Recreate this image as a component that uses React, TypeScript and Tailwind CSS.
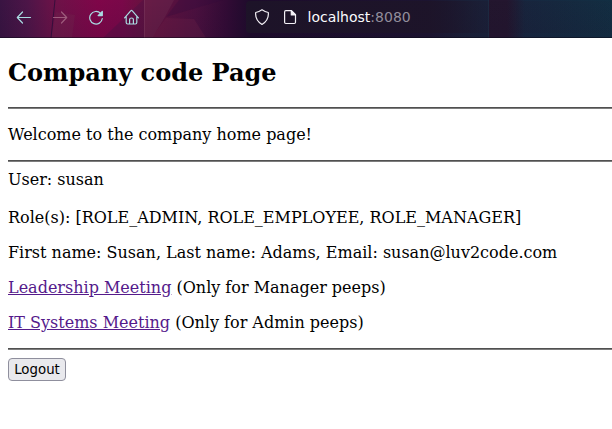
import type { ReactNode } from "react";

function Backdrop() {
  return (
    <svg className="absolute inset-0 h-full w-full" viewBox="0 0 612 38" preserveAspectRatio="none" aria-hidden="true">
      <defs>
        <linearGradient id="sky" x1="0" x2="1" y1="0" y2="0">
          <stop offset="0" stopColor="#391442" />
          <stop offset=".045" stopColor="#4d1548" />
          <stop offset=".09" stopColor="#6d1248" />
          <stop offset=".16" stopColor="#7f0649" />
          <stop offset=".2" stopColor="#7a0849" />
          <stop offset=".235" stopColor="#67123f" />
          <stop offset=".32" stopColor="#4b103f" />
          <stop offset=".37" stopColor="#320b35" />
          <stop offset=".41" stopColor="#1d0b2b" />
          <stop offset=".7" stopColor="#1c1430" />
          <stop offset=".76" stopColor="#1a2038" />
          <stop offset=".85" stopColor="#172740" />
          <stop offset="1" stopColor="#122f43" />
        </linearGradient>
        <linearGradient id="shade" x1="0" x2="0" y1="0" y2="1">
          <stop offset="0" stopColor="#180a28" stopOpacity="0" />
          <stop offset="1" stopColor="#180a28" stopOpacity=".12" />
        </linearGradient>
        <linearGradient id="field" x1="0" x2="1" y1="0" y2="0">
          <stop offset="0" stopColor="#1d1428" stopOpacity=".9" />
          <stop offset=".5" stopColor="#1d1428" stopOpacity=".85" />
          <stop offset=".65" stopColor="#1d1428" stopOpacity=".2" />
          <stop offset="1" stopColor="#1d1428" stopOpacity=".05" />
        </linearGradient>
        <linearGradient id="seam" x1="0" x2="1" y1="0" y2="0">
          <stop offset="0" stopColor="#24162f" />
          <stop offset=".5" stopColor="#24162f" />
          <stop offset="1" stopColor="#24162f" stopOpacity="0" />
        </linearGradient>
      </defs>
      <path fill="url(#sky)" d="M0 0h612v38H0z" />
      <path fill="#752b50" fillOpacity=".3" d="M56 12 75 15 72 38H51z" />
      <path fill="#4b1246" fillOpacity=".4" d="M143 0 103 38h41V0z" />
      <path fill="#6b2b50" fillOpacity=".45" d="M144 0h30l-9 17-13 21h-8z" />
      <path fill="#31093a" fillOpacity=".3" d="M179 0h44l-57 17z" />
      <path fill="#752648" fillOpacity=".3" d="m166 18 28 1 12 19h-55z" />
      <path fill="url(#seam)" d="M489 0h36v38h-36z" />
      <path fill="url(#shade)" d="M0 0h612v38H0z" />
      <path fill="url(#field)" d="M250 1h362v32H250q-4 0-4-4V5q0-4 4-4z" />
      <path stroke="#210d36" strokeOpacity=".7" d="M55 0 51 38" />
      <path stroke="#8b5070" strokeOpacity=".3" d="M144.5 0v38" />
      <path stroke="#27425a" strokeOpacity=".25" d="M488.5 0v38" />
      <path fill="#080716" fillOpacity=".5" d="M0 37h612v1H0z" />
    </svg>
  );
}

function Icon({ className, children }: { className: string; children: ReactNode }) {
  return (
    <svg className={`size-4 shrink-0 ${className}`} viewBox="0 0 16 16" fill="none" stroke="currentColor" strokeWidth="1.2" strokeLinecap="round" strokeLinejoin="round" aria-hidden="true">
      {children}
    </svg>
  );
}

function Toolbar() {
  return (
    <header className="relative h-[38px] overflow-hidden">
      <Backdrop />
      <div className="relative flex h-[34px] items-center">
        <nav className="flex w-[246px] shrink-0 items-center gap-5 pl-4 text-[#a9dbe2]">
          <Icon className=""><path d="M14.5 8.5h-13M6.5 3 1.3 8.5 6.5 14" /></Icon>
          <Icon className="text-[#9e5b7c]"><path d="M1.5 8.5h13M9.5 3l5.2 5.5L9.5 14" /></Icon>
          <Icon className="">
            <path d="M12.6 4.4A6.3 6.3 0 1 0 14.3 9.5" />
            <path d="M14.3 2.4v4.2h-4.2z" fill="currentColor" />
          </Icon>
          <Icon className="">
            <path d="M.6 8.9 6.7 1.8q.8-.8 1.6 0l6.1 7.1M2.2 7.5v6q0 1.5 1.5 1.5h7.6q1.5 0 1.5-1.5v-6M5.6 14.8v-4.3Q5.6 9 7.5 9t1.9 1.5v4.3" />
          </Icon>
        </nav>
        <div className="flex h-[34px] flex-1 items-center pl-2">
          <Icon className="text-[#f3f0f6]">
            <path d="M8 .8Q11 3 14.3 3.5q.8 7.5-6.3 12-7.1-4.5-6.3-12Q5 3 8 .8z" />
          </Icon>
          <Icon className="ml-3 text-[#f3f0f6]">
            <path d="M3.8 1.7h5.7l4 4v7.6q0 1.2-1.2 1.2H3.8q-1.2 0-1.2-1.2V2.9q0-1.2 1.2-1.2z" />
            <path d="M9.3 1.8V6h4.2z" fill="currentColor" />
          </Icon>
          <span className="ml-[9.5px] font-['DejaVu_Sans',sans-serif] text-[14px] leading-4 text-[#fbfbfe]">
            localhost<span className="text-[#928d9b]">:8080</span>
          </span>
        </div>
      </div>
    </header>
  );
}

function Rule() {
  return <hr className="h-0.5 border-t border-b border-t-[#505050] border-b-[#7d7d7d]" />;
}

export default function App() {
  return (
    <div className="h-[429px] overflow-hidden bg-white text-black">
      <Toolbar />
      <main className="pl-2 font-['DejaVu_Serif',serif] text-base leading-[19px]">
        <h2 className="mt-[21px] mb-5 text-2xl leading-7 font-bold">Company code Page</h2>
        <Rule />
        <p className="mt-4 mb-4">Welcome to the company home page!</p>
        <Rule />
        <div className="mt-2">
          User: susan
          <br />
          <br />
          Role(s): [ROLE_ADMIN, ROLE_EMPLOYEE, ROLE_MANAGER]
        </div>
        <p className="mt-4">First name: Susan, Last name: Adams, Email: susan@luv2code.com</p>
        <p className="mt-4">
          <a href="#" className="text-[#551a8b] underline">Leadership Meeting</a> (Only for Manager peeps)
        </p>
        <p className="my-4">
          <a href="#" className="text-[#551a8b] underline">IT Systems Meeting</a> (Only for Admin peeps)
        </p>
        <Rule />
        <button type="button" className="mt-2 flex h-[23px] w-[58px] items-center justify-center rounded border border-[#8f8f9d] bg-[#e9e9ed] font-['DejaVu_Sans',sans-serif] text-[13.33px] leading-4">
          Logout
        </button>
      </main>
    </div>
  );
}
